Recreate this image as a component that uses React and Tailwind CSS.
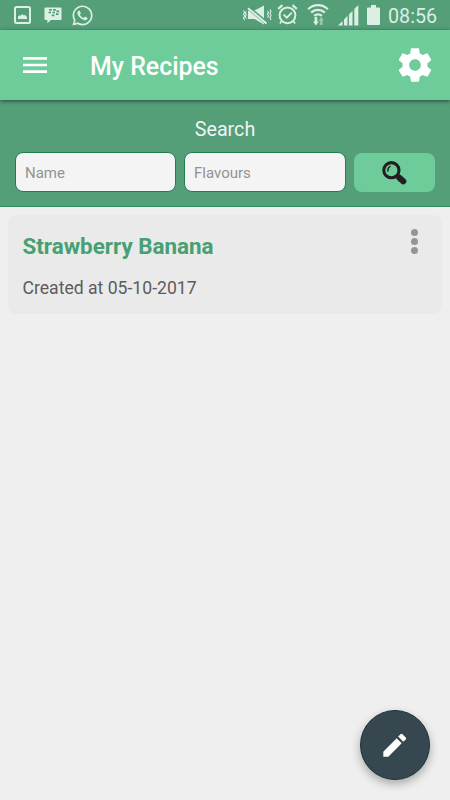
import React from 'react';
import { MdMenu } from 'react-icons/md';
import { FaWhatsapp } from 'react-icons/fa';

const ImageIcon = () => (
    <svg width="17" height="18" viewBox="0 0 17 18" fill="none">
        <rect x="1" y="1" width="15" height="16" rx="1.5" stroke="currentColor" strokeWidth="2" />
        <path d="M4 13v-2.5l1.5-1.2 1 .4L8.3 8l1.5 1.5 1-.7L13 11v2z" fill="currentColor" />
    </svg>
);

const BbmIcon = () => (
    <svg width="18" height="17" viewBox="0 0 18 17">
        <path d="M1.5.5h15a1 1 0 0 1 1 1V12a1 1 0 0 1-1 1H7l-3.6 3.3V13H1.5a1 1 0 0 1-1-1V1.5a1 1 0 0 1 1-1z" fill="currentColor" />
        <path
            d="M5.2 2.8h2.5M9.2 2.8h2.5M4.5 5.5h2.5M8.5 5.5h2.5M12.5 4.3H15M7.8 8.4h2.5M11.9 7.2h2.5"
            stroke="#4b9570"
            strokeWidth="1.7"
        />
    </svg>
);

const MuteVibrateIcon = () => (
    <svg width="30" height="20" viewBox="0 0 30 20" fill="none" stroke="currentColor">
        <path d="M6 5.5h6.5L22 .5v19L12.5 14H6z" fill="currentColor" stroke="none" />
        <path d="M6.500 3 25 18.200" stroke="#549e78" strokeWidth="3.800" />
        <path d="M6 3.200 24.500 18.400" strokeWidth="2" />
        <path d="M1.500 5.500 2.600 7.200 1.500 9l1.100 2-1.100 2 1.100 2M4.300 6.500l-1 1.500 1 1.700-1 1.700 1 2" strokeWidth="1.100" />
        <path d="M28 4.500 29 6.500l-1 2 1 2-1 2 1 2.500M25.500 6l1 1.700-1 1.600 1 1.700-1 1.700" strokeWidth="1.100" />
    </svg>
);

const AlarmIcon = () => (
    <svg width="23" height="23" viewBox="0 0 23 23" fill="none" stroke="currentColor">
        <circle cx="11.500" cy="12.300" r="7.900" strokeWidth="2" />
        <path d="M2.200 5.800 6.500 2.200M20.800 5.800l-4.300-3.600" strokeWidth="2.200" />
        <path d="m5.800 18-1.900 2.500M17.200 18l1.900 2.500" strokeWidth="1.800" />
        <path d="m7.600 11.600 3.200 3.100 5-5" strokeWidth="1.800" />
    </svg>
);

const WifiIcon = () => (
    <svg width="22" height="23" viewBox="0 0 22 23" fill="none" stroke="currentColor" strokeWidth="2.2">
        <path d="M1.2 6.200a14 14 0 0 1 19.600 0M4.200 9.600a9.700 9.700 0 0 1 13.600 0M7.200 12.900a5.400 5.400 0 0 1 7.600 0" />
        <path d="M7.600 14h2.600v4.500h1.600l-2.900 4-2.900-4h1.600z" fill="currentColor" stroke="none" />
        <path d="M12.800 22v-4.500h-1.300l2.700-3.700 2.700 3.700h-1.300V22z" fill="currentColor" opacity="0.5" stroke="none" />
    </svg>
);

const SignalIcon = () => (
    <svg width="21" height="21" viewBox="0 0 21 21" fill="currentColor">
        <path d="M0 20.500 4.500 16v4.500zM6 14.500l3.500-3.700v9.700H6zM11 9.500l3.500-3.700v14.700H11zM16.300 4 20.300 0v20.500h-4z" />
    </svg>
);

const BatteryIcon = () => (
    <svg width="13" height="20" viewBox="0 0 13 20" fill="currentColor">
        <path d="M4 0h5v2.500h3a1 1 0 0 1 1 1V19a1 1 0 0 1-1 1H1a1 1 0 0 1-1-1V3.500a1 1 0 0 1 1-1h3z" />
    </svg>
);

const GearIcon = () => (
    <svg width="40" height="40" viewBox="0 0 24 24" fill="currentColor">
        <path d="M19.430 12.980c.04-.32.07-.64.07-.98s-.03-.66-.07-.98l2.110-1.650c.19-.15.24-.42.12-.64l-2-3.460c-.12-.22-.39-.3-.61-.22l-2.490 1c-.52-.4-1.080-.73-1.690-.98l-.38-2.650C14.460 2.180 14.250 2 14 2h-4c-.25 0-.46.18-.49.42l-.38 2.650c-.61.25-1.170.59-1.690.98l-2.490-1c-.23-.09-.49 0-.61.22l-2 3.460c-.13.22-.07.49.12.64l2.110 1.650c-.04.32-.07.65-.07.98s.03.66.07.98l-2.110 1.650c-.19.15-.24.42-.12.64l2 3.460c.12.22.39.3.61.22l2.490-1c.52.4 1.080.73 1.690.98l.38 2.650c.03.24.24.42.49.42h4c.25 0 .46-.18.49-.42l.38-2.650c.61-.25 1.170-.59 1.690-.98l2.490 1c.23.09.49 0 .61-.22l2-3.460c.12-.22.07-.49-.12-.64l-2.110-1.650zM12 15.500c-1.930 0-3.500-1.570-3.500-3.500s1.570-3.500 3.500-3.500 3.500 1.570 3.500 3.500-1.570 3.500-3.500 3.500z" />
    </svg>
);

const SearchIcon = () => (
    <svg width="26" height="26" viewBox="0 0 26 26" fill="none" stroke="#231f20">
        <circle cx="9.400" cy="10.200" r="7.600" strokeWidth="3.100" />
        <path d="M5.800 11c0-2.200.7-3.700 2.200-4.600" strokeWidth="1.500" strokeLinecap="round" />
        <path d="m14.600 15.300 2.400 2.400" strokeWidth="3.500" />
        <path d="m17.300 17.800 3.900 3.500" strokeWidth="6.200" strokeLinecap="round" />
    </svg>
);

const PencilIcon = () => (
    <svg width="40" height="40" viewBox="0 0 40 40" fill="currentColor">
        <path d="M8.300 26.700 21.700 13.300l5 5-13.400 13.400h-5z" />
        <path d="M23.200 11.600 25.500 9.300q1-.9 2 0l3.200 3.200q.9 1 0 2l-2.500 2.300z" />
    </svg>
);

const StatusBar = () => (
    <div className="flex h-[30px] items-center bg-[#549e78] pl-[14px] text-[#dcefe4]">
        <div className="flex items-center">
            <ImageIcon />
            <span className="ml-[13px] pt-px"><BbmIcon /></span>
            <FaWhatsapp size={23} className="ml-[9px]" />
        </div>
        <div className="ml-auto flex items-center pr-[13px]">
            <MuteVibrateIcon />
            <span className="ml-[4px]"><AlarmIcon /></span>
            <span className="ml-[8px]"><WifiIcon /></span>
            <span className="ml-[9px] pt-px"><SignalIcon /></span>
            <span className="ml-[8px]"><BatteryIcon /></span>
            <span className="ml-[8px] w-[49px] whitespace-nowrap pt-[4px] text-[19.7px] leading-none">08:56</span>
        </div>
    </div>
);

const Header = () => (
    <header className="relative flex h-[70px] items-center bg-[#6ecc9b] pl-[19px] pr-[15px] text-white shadow-[0_1px_4px_rgba(0,0,0,0.55)]">
        <button aria-label="Menu"><MdMenu size={32} /></button>
        <h1 className="ml-[39px] flex-1 pt-[4px] text-[24.9px] font-medium leading-none">My Recipes</h1>
        <button aria-label="Settings"><GearIcon /></button>
    </header>
);

const SearchPanel = () => (
    <section className="h-[107px] border-b border-[#2c8f60] bg-[#549e78] px-[15px] pt-[18px]">
        <h2 className="text-center text-[19.7px] leading-[24px] text-[#f0f4f2]">Search</h2>
        <div className="mt-[10px] flex gap-[8px]">
            <input
                placeholder="Name"
                className="h-[40px] w-[161px] rounded-[8px] border border-[#1f7f53] bg-[#f4f4f4] px-[9px] pt-[2px] text-[15px] placeholder:text-[#929292]"
            />
            <input
                placeholder="Flavours"
                className="h-[40px] w-[162px] rounded-[8px] border border-[#1f7f53] bg-[#f4f4f4] px-[9px] pt-[2px] text-[15px] placeholder:text-[#929292]"
            />
            <button aria-label="Search" className="mt-px flex h-[39px] w-[81px] items-center justify-center rounded-[8px] bg-[#6ecc9b]">
                <SearchIcon />
            </button>
        </div>
    </section>
);

const RecipeCard = ({ recipe }) => (
    <article className="flex h-[99px] justify-between rounded-[8px] bg-[#eaeaea] pl-[14.5px] pr-[24px]">
        <div>
            <h3 className="mt-[17px] text-[22.4px] font-bold leading-[28px] text-[#45a073]">{recipe.title}</h3>
            <p className="mt-[17px] text-[17.6px] leading-[22px] text-[#5c5c5c]">Created at {recipe.created}</p>
        </div>
        <button aria-label="More" className="mt-[14px] flex h-[25px] flex-col justify-between text-[#959595]">
            <span className="size-[7px] rounded-full bg-current" />
            <span className="size-[7px] rounded-full bg-current" />
            <span className="size-[7px] rounded-full bg-current" />
        </button>
    </article>
);

const recipes = [{ title: 'Strawberry Banana', created: '05-10-2017' }];

export default function App() {
    return (
        <main className="flex h-[800px] w-[450px] flex-col overflow-hidden bg-[#efefef] font-[Roboto,sans-serif]">
            <StatusBar />
            <Header />
            <SearchPanel />
            <div className="flex-1 px-[8px] pt-[8px]">
                {recipes.map((recipe) => (
                    <RecipeCard key={recipe.title} recipe={recipe} />
                ))}
            </div>
            <button
                aria-label="New recipe"
                className="mb-[20px] mr-[20px] flex size-[70px] items-center justify-center self-end rounded-full border border-[#17323d] bg-[#37474f] text-white shadow-[0_4px_10px_rgba(0,0,0,0.3)]"
            >
                <PencilIcon />
            </button>
        </main>
    );
}
